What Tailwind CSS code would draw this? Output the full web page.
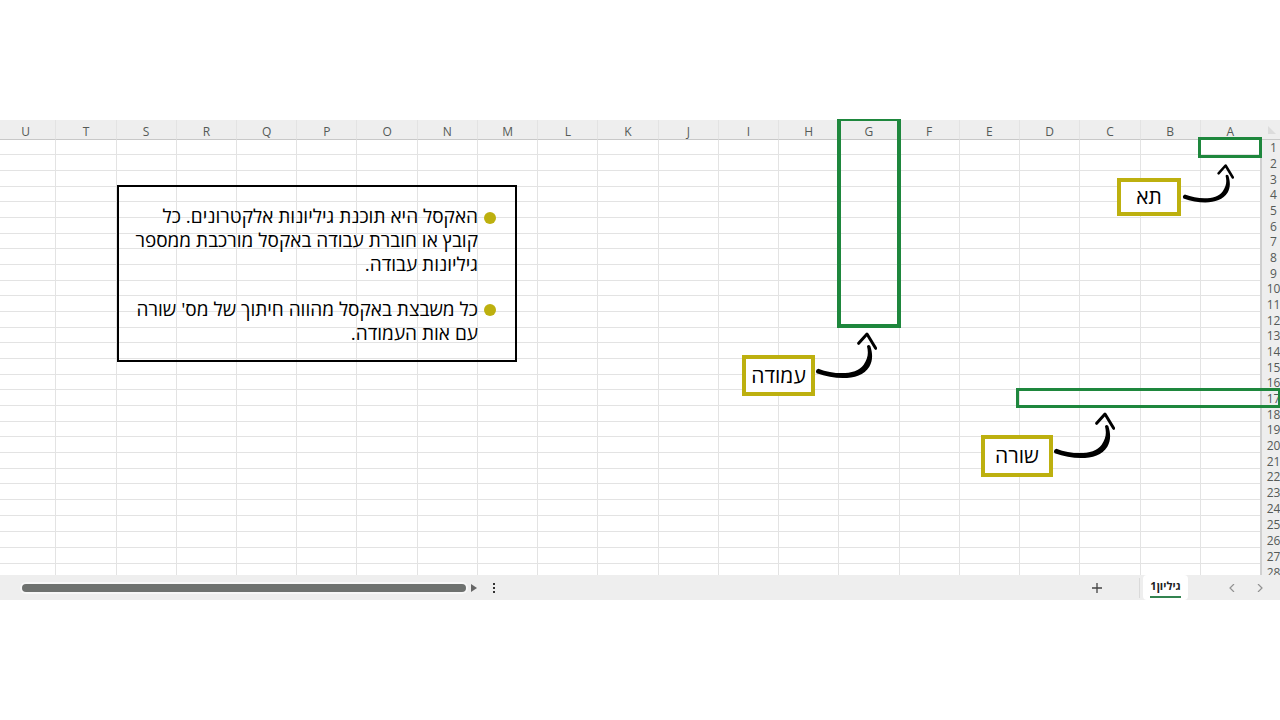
<!DOCTYPE html>
<html lang="he">
<head>
<meta charset="utf-8">
<title>גיליון1</title>
<script src="https://cdn.jsdelivr.net/npm/@tailwindcss/browser@4"></script>
</head>
<body class="flex min-h-screen flex-col justify-center overflow-x-hidden bg-white font-['Open_Sans','Noto_Sans',sans-serif] text-black">
<main class="relative">
  <div class="h-[455px] overflow-hidden bg-white" dir="rtl">
    <table class="w-[calc(100%+5px)] table-fixed border-separate border-spacing-0 text-xs leading-[15px] text-[#555a57]">
      <colgroup id="cols"><col class="w-5"></colgroup>
      <thead><tr id="head" class="h-5 bg-[#eeeeee]"><td class="border-b border-[#c8c8c8] p-0"><svg class="mr-1 h-2 w-2" viewBox="0 0 8 8" aria-hidden="true"><path d="M0 0V8H8Z" fill="#dcdcdc"/></svg></td></tr></thead>
      <tbody id="rows"></tbody>
    </table>
  </div>

  <footer class="flex h-[25px] items-center bg-[#eeeeee]">
    <div class="ml-[22px] h-2 w-[444px] rounded-full bg-[#6e716f] ring-2 ring-[#f7f7f7]" role="scrollbar" aria-label="גלילה אופקית" aria-controls="rows" aria-valuenow="0"></div>
    <button class="ml-[5px] flex h-4 w-2 items-center" aria-label="גלול"><svg class="h-2 w-2" viewBox="0 0 8 8"><path d="M0 0 6 4 0 8Z" fill="#666"/></svg></button>
    <button class="ml-[11px] flex h-4 w-2 items-center justify-center" aria-label="אפשרויות"><svg class="h-3 w-1" viewBox="0 0 4 12"><path d="M1 1h2v2H1zM1 5h2v2H1zM1 9h2v2H1z" fill="#333"/></svg></button>
    <button class="ml-auto flex h-5 w-5 items-center justify-center" aria-label="גיליון חדש"><svg class="h-3 w-3" viewBox="0 0 12 12"><path d="M6 1v10M1 6h10" stroke="#444" stroke-width="1.3"/></svg></button>
    <span class="ml-8 h-5 w-px bg-[#dadada]"></span>
    <button class="ml-[3px] flex h-[25px] w-[45px] flex-col items-center rounded bg-white pt-px text-[11px] leading-5 font-bold text-[#222]" dir="rtl"><span class="border-b-2 border-[#338350]">גיליון1</span></button>
    <button class="ml-[34px] flex h-5 w-5 items-center justify-center" aria-label="הקודם"><svg class="h-2 w-2" viewBox="0 0 8 8"><path d="M6 0 2 4 6 8" fill="none" stroke="#929292" stroke-width="1.2"/></svg></button>
    <button class="mr-[10px] ml-2 flex h-5 w-5 items-center justify-center" aria-label="הבא"><svg class="h-2 w-2" viewBox="0 0 8 8"><path d="M2 0 6 4 2 8" fill="none" stroke="#929292" stroke-width="1.2"/></svg></button>
  </footer>

  <!-- Floating explanation box -->
  <section class="absolute top-[65px] left-[117px] w-[400px] border-2 border-black pt-[17px] pr-[19px] pb-[15px] pl-4" dir="rtl">
    <ul class="flex flex-col gap-[21px] text-[19px] leading-6 whitespace-nowrap">
      <li class="flex gap-[6px]"><span class="mt-2 size-3 shrink-0 rounded-full bg-[#bdb00f]"></span><p>האקסל היא תוכנת גיליונות אלקטרונים. כל<br>קובץ או חוברת עבודה באקסל מורכבת ממספר<br>גיליונות עבודה.</p></li>
      <li class="flex gap-[6px]"><span class="mt-[7px] size-3 shrink-0 rounded-full bg-[#bdb00f]"></span><p>כל משבצת באקסל מהווה חיתוך של מס' שורה<br>עם אות העמודה.</p></li>
    </ul>
  </section>

  <!-- Highlights on the sheet -->
  <div class="absolute top-[-1px] right-[379px] h-[209px] w-[64px] border-4 border-t-2 border-[#1e873d]"></div>
  <div class="absolute top-[17px] right-[18px] h-[21px] w-[64px] border-3 border-[#1e873d]"></div>
  <div class="absolute top-[268px] right-0 h-5 w-[264px] border-3 border-r-2 border-[#1e873d]"></div>

  <!-- Callouts -->
  <div class="absolute top-[58px] right-[99px] flex h-[38px] w-[64px] items-center justify-center border-4 border-[#bdb00f] bg-white text-[21px]" dir="rtl">תא</div>
  <div class="absolute top-[235px] right-[465px] flex h-[41px] w-[73px] items-center justify-center border-4 border-[#bdb00f] bg-white text-[21px]" dir="rtl">עמודה</div>
  <div class="absolute top-[315px] right-[227px] flex h-[42px] w-[72px] items-center justify-center border-4 border-[#bdb00f] bg-white text-[21px]" dir="rtl">שורה</div>

  <svg class="absolute size-0" aria-hidden="true">
    <symbol id="arrow" viewBox="0 0 186 147">
      <path d="M10 113C60 132 124 133 146 101C159 82 161 66 156 46Q160 39 166 45C174 70 173 90 163 107C138 148 68 149 5 127Q-1 117 10 113Z"/>
      <path d="M131 37 156 9 182 52" fill="none" stroke="#000" stroke-width="9" stroke-linecap="round" stroke-linejoin="round"/>
    </symbol>
  </svg>
  <svg class="absolute top-[43px] right-[46px] h-[41px] w-[52px]"><use href="#arrow"/></svg>
  <svg class="absolute top-[211px] right-[403px] h-[49px] w-[62px]"><use href="#arrow"/></svg>
  <svg class="absolute top-[291px] right-[165px] h-[49px] w-[62px]"><use href="#arrow"/></svg>
</main>
<script>
  const letters = 'ABCDEFGHIJKLMNOPQRSTU'.split('');
  document.getElementById('cols').insertAdjacentHTML('beforeend', letters.map(() => '<col>').join(''));
  document.getElementById('head').insertAdjacentHTML('beforeend', letters.map(l =>
    `<th scope="col" class="border-b border-l border-b-[#c8c8c8] border-l-[#e3e3e3] p-0 pt-[5px] align-middle font-normal leading-[14px]">${l}</th>`).join(''));
  const cells = '<td class="border-b border-l border-[#e3e3e3] p-0"></td>'.repeat(letters.length);
  let html = '';
  for (let n = 1; n <= 28; n++) {
    const h = n % 3 === 1 && n < 25 ? 'h-[15px]' : 'h-4';
    html += `<tr class="${h}"><th scope="row" class="border-l-2 border-[#d0d0d0] bg-[#eeeeee] p-0 font-normal leading-[15px]"><span class="flex justify-center pl-[5px]">${n}</span></th>${cells}</tr>`;
  }
  document.getElementById('rows').innerHTML = html;
</script>
</body>
</html>
